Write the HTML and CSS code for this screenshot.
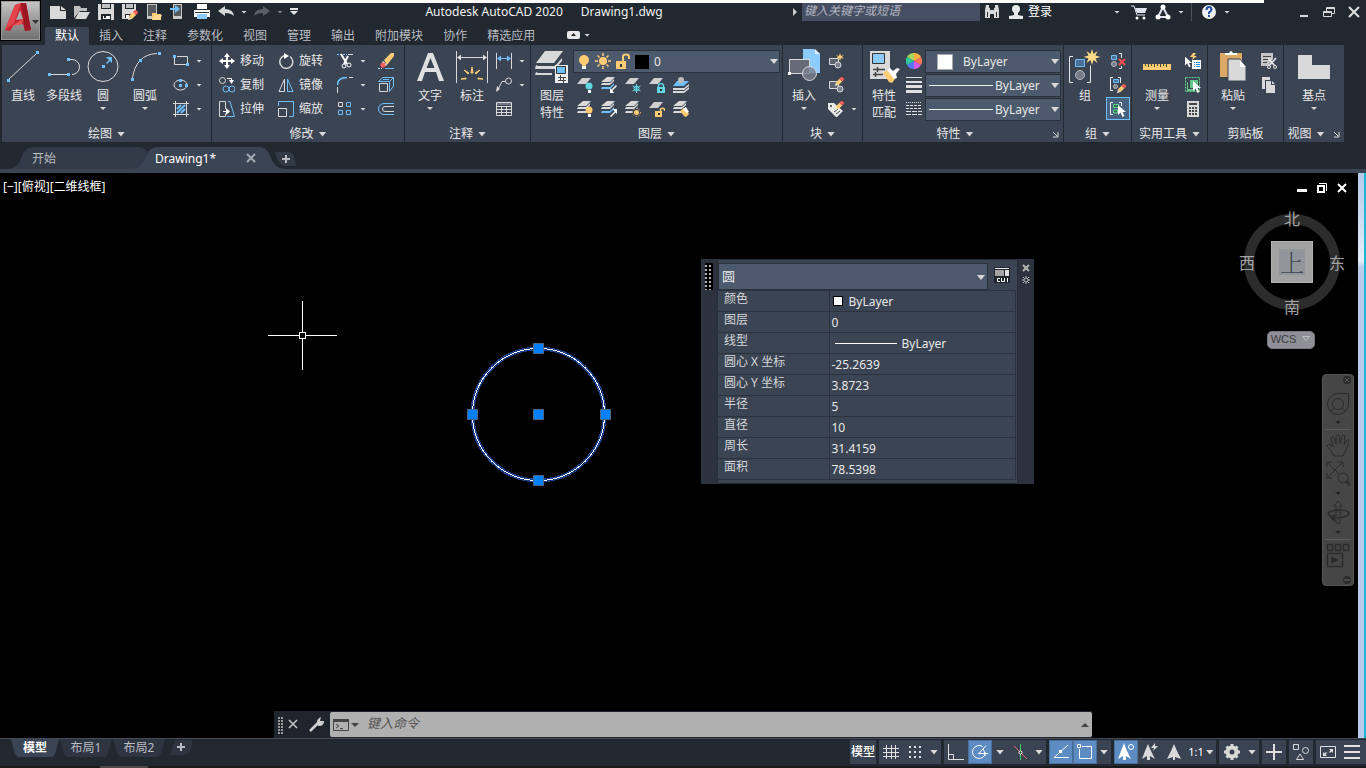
FILE: index.html
```html
<!DOCTYPE html>
<html lang="zh-CN">
<head>
<meta charset="utf-8">
<title>Autodesk AutoCAD 2020 - Drawing1.dwg</title>
<link rel="stylesheet" href="styles.css">
</head>
<body>
<svg class="sprite" aria-hidden="true">
  <symbol id="sheet" viewBox="0 0 16 16"><path d="M5 1h9l-5 6H0z" fill="#d0d0d0"/></symbol>
  <symbol id="stack" viewBox="0 0 16 16"><path d="M6 0h8l-5 5H0zM1 6h8l4-4v2L9 8H0zM1 10h8l4-4v2l-4 4H0z" fill="#d9d9d9"/></symbol>
  <symbol id="stackblue" viewBox="0 0 16 16"><path d="M6 0h8l-5 5H0zM1 6h8l4-4v2L9 8H0z" fill="#d9d9d9"/><path d="M1 10h8l4-4v2l-4 4H0z" fill="#6fbfff"/></symbol>
  <symbol id="pencil" viewBox="0 0 10 10"><path d="M0 10l1-4 3 3z" fill="#f4e2c0"/><path d="M1 6l4-4 3 3-4 4z" fill="#ffcc73"/><path d="M5 2l2-2h1l2 2v1L8 5z" fill="#ff5c5c"/></symbol>
  <symbol id="cursor" viewBox="0 0 8 12"><path d="M0 0v10l2.500-2.500L4.500 12l2-1-2-4H8z" fill="#fff"/></symbol>
</svg>

<div class="overhang"></div>
<header class="top">
  <button class="app" aria-label="应用程序菜单">
    <svg width="36" height="36" viewBox="0 0 36 36"><path d="M1 27L11 2l6-2h5l5 27-6 1-2-7-9 1-4 6z" fill="#c42430"/><path d="M11 2l6-2-7 20-9 7z" fill="#e3434b"/><path d="M17 0h5l5 27-6 1z" fill="#9d1722"/><path d="M12 17l4-10 3 9z" fill="#aaadb0"/><path d="M6 24l13-8-1 5-9 2z" fill="#e65255"/><path d="M28 17h7l-3.500 4z" fill="#333"/></svg>
  </button>
  <div class="titlebar">
    <div class="qat">
      <button aria-label="新建"><svg width="16" height="16"><path d="M0 2h10v5h6v8H0z" fill="#d9d9d9"/><path d="M11 2l5 4h-5z" fill="#d9d9d9"/></svg></button>
      <button aria-label="打开"><svg width="16" height="16"><path d="M0 14V2h6l1 2h6v3H6z" fill="#bfbfbf"/><path d="M5 8h11l-4 7H1z" fill="#d9d9d9"/></svg></button>
      <button aria-label="保存"><svg width="16" height="16"><path d="M0 0h3v5h10V0h3v16H0z" fill="#d9d9d9"/><path d="M4 0h8v4H4z" fill="#bfbfbf"/><path d="M3 10h10v6H3z" fill="#22252b"/><path d="M5 12h7v3H5z" fill="#fff"/><path d="M6 12h2v2H6z" fill="#22252b"/></svg></button>
      <button aria-label="另存为"><svg width="16" height="16"><path d="M0 0h3v5h9V0h2v10l-5 5H0z" fill="#d9d9d9"/><path d="M4 0h7v4H4z" fill="#bfbfbf"/><path d="M3 10h6v4H3z" fill="#22252b"/><path d="M4 11h3v3H4z" fill="#fff"/><use href="#pencil" x="6" y="6" width="10" height="10"/></svg></button>
      <button aria-label="从 Web 打开"><svg width="16" height="16"><path d="M1 0h10v15H1z" fill="#c8c8c8"/><path d="M2 1h8v11H2z" fill="#56585c"/><path d="M6 9h4l1 1h4v6H6z" fill="#ffcc73"/><path d="M6 16l2-5h8l-2 5z" fill="#ffdb92"/></svg></button>
      <button aria-label="保存到 Web"><svg width="16" height="16"><path d="M3 0h9v15H3z" fill="#c8c8c8"/><path d="M4 1h7v11H4z" fill="#56585c"/><path d="M0 4h5V1l5 4-5 4V6H0z" fill="#6fbfff"/></svg></button>
      <button aria-label="打印"><svg width="16" height="16"><path d="M3 0h10v5H3zM0 6h16v7H0z" fill="#fff"/><path d="M1 8h14v1H1z" fill="#333"/><path d="M3 10h10v5H3z" fill="#8ccbff"/></svg></button>
      <button aria-label="放弃"><svg width="16" height="16"><path d="M0 7l7-5v3q8 0 9 7-3-3-9-3v3z" fill="#d9d9d9"/></svg></button>
      <button class="slim" aria-label="放弃列表"><i class="caret s"></i></button>
      <button aria-label="重做"><svg width="16" height="16"><path d="M16 7L9 2v3q-8 0-9 7 3-3 9-3v3z" fill="#5a6068"/></svg></button>
      <button class="slim dim" aria-label="重做列表"><i class="caret s"></i></button>
      <button class="custom" aria-label="自定义快速访问工具栏"><svg width="10" height="8"><path d="M1 0h8v2H1zM1 3h8L5 7z" fill="#e6e6e6"/></svg></button>
    </div>
    <h1 class="title"><span>Autodesk AutoCAD 2020</span><span>Drawing1.dwg</span></h1>
    <div class="infocenter">
      <button class="slim" aria-label="折叠搜索"><svg width="5" height="8"><path d="M0 0l4 4-4 4z" fill="#ccc"/></svg></button>
      <input class="search" type="text" placeholder="键入关键字或短语" aria-label="搜索">
      <button class="tool" aria-label="查找"><svg width="16" height="16"><path d="M2 1h3v3h1v2h4V4h1V1h3l1 5v8h-5v-4H6v4H1V6z" fill="#d9d9d9"/><path d="M3 8h1v5H3zM12 8h1v5h-1z" fill="#333"/></svg></button>
      <button class="signin"><svg width="16" height="16"><circle cx="8" cy="5" r="4" fill="#e8e8e8"/><path d="M6 8h4v3l5 1v3H1v-3l5-1z" fill="#e8e8e8"/></svg>登录</button>
      <button class="slim account" aria-label="帐户"><i class="caret s"></i></button>
      <button class="tool" aria-label="应用商店"><svg width="16" height="16"><path d="M0 2h3l3 9h8" fill="none" stroke="#e0e4f0"/><path d="M4 4h12l-2 5H6z" fill="#e0e4f0"/><circle cx="6" cy="14" r="1.500" fill="#fff"/><circle cx="13" cy="14" r="1.500" fill="#fff"/></svg></button>
      <button class="tool" aria-label="Autodesk 360"><svg width="16" height="16"><path d="M8 3L3 13h10z" fill="none" stroke="#dde1f0" stroke-width="2"/><circle cx="8" cy="3" r="2.500" fill="#fff"/><circle cx="3" cy="13" r="2.500" fill="#fff"/><circle cx="13" cy="13" r="2.500" fill="#fff"/></svg></button>
      <button class="slim" aria-label="更多应用"><i class="caret s"></i></button>
      <i class="sep"></i>
      <button class="tool" aria-label="帮助"><svg width="16" height="16"><circle cx="8" cy="8" r="7" fill="#f2f2f2"/><path d="M5.500 6q0-3 2.500-3t2.500 2.500q0 1.500-2.500 3V10M8 11v2" fill="none" stroke="#1d4fa5" stroke-width="2"/></svg></button>
      <button class="slim" aria-label="帮助菜单"><i class="caret s"></i></button>
    </div>
    <div class="winbtns">
      <button aria-label="最小化"><svg width="12" height="12"><path d="M2 9h8v2H2z" fill="#d9d9d9"/></svg></button>
      <button aria-label="还原"><svg width="12" height="12"><path d="M3.500 5V1.500h8v6H9M.5 5.500h8v5h-8zM0 6.500h8M3 2.500h9" fill="none" stroke="#d9d9d9"/></svg></button>
      <button aria-label="关闭"><svg width="12" height="12"><path d="M1 1l10 10M11 1L1 11" stroke="#e0e0e0" stroke-width="2"/></svg></button>
    </div>
  </div>
  <nav class="rtabs">
    <a href="#" class="on">默认</a><a href="#">插入</a><a href="#">注释</a><a href="#">参数化</a><a href="#">视图</a><a href="#">管理</a><a href="#">输出</a><a href="#">附加模块</a><a href="#">协作</a><a href="#">精选应用</a>
    <button aria-label="最小化功能区"><svg width="13" height="8"><rect width="13" height="8" rx="2" fill="#e8e8e8"/><path d="M4 5l2.500-3L9 5z" fill="#222"/></svg><i class="caret s"></i></button>
  </nav>
</header>

<main class="ribbon">
  <section class="panel p-draw">
    <div class="body">
      <button class="big w42"><svg width="32" height="34"><path d="M2 30L30 4" stroke="#d9d9d9"/><path d="M0 30h3v3H0zM29 2h3v3h-3z" fill="#6fbfff"/></svg>直线</button>
      <button class="big w40"><svg width="32" height="34"><path d="M2 25.500h18M22 10.500h2a7.500 7.500 0 0 1 0 15" fill="none" stroke="#d9d9d9"/><path d="M0 24h3v3H0zM19 24h3v3h-3zM19 9h3v3h-3z" fill="#6fbfff"/></svg>多段线</button>
      <button class="big w38"><svg width="32" height="34"><circle cx="16" cy="17.500" r="15" fill="none" stroke="#d9d9d9"/><path d="M15 16h3v3h-3zM19 8h6v6l-2-2-3 3-1-1 3-3z" fill="#6fbfff"/></svg>圆<i class="caret s"></i></button>
      <button class="big w46"><svg width="32" height="34"><path d="M3.500 29Q5 18 11 11.500T28 4.500" fill="none" stroke="#d9d9d9"/><path d="M2 29h3v3H2zM10 10h3v3h-3zM29 3h3v3h-3z" fill="#6fbfff"/></svg>圆弧<i class="caret s"></i></button>
      <div class="col pad5">
        <button class="sm" aria-label="矩形"><svg width="16" height="16"><path d="M1.500 4v7.500H13M4 3.500h10.500V11" fill="none" stroke="#d9d9d9"/><path d="M0 2h3v3H0zM13 10h3v3h-3z" fill="#6fbfff"/></svg><i class="caret s"></i></button>
        <button class="sm" aria-label="椭圆"><svg width="16" height="16"><ellipse cx="7.500" cy="8" rx="6.500" ry="5" fill="none" stroke="#d9d9d9"/><path d="M6 2h3v3H6zM6 7h3v3H6zM12 7h3v3h-3z" fill="#6fbfff"/></svg><i class="caret s"></i></button>
        <button class="sm" aria-label="图案填充"><svg width="16" height="16"><path d="M0 2.500h16M0 13.500h16M2.500 0v16M13.500 0v16" stroke="#d9d9d9"/><path d="M4 8l4-4M4 12l8-8M8 12l4-4" stroke="#6fbfff" stroke-width="2"/></svg><i class="caret s"></i></button>
      </div>
    </div>
    <h2>绘图<i class="caret"></i></h2>
  </section>

  <section class="panel p-mod">
    <div class="body modgrid">
      <button class="lab"><svg width="16" height="16"><path d="M8 0l3 4H9v3h3V5l4 3-4 3V9H9v3h2l-3 4-3-4h2V9H4v2L0 8l4-3v2h3V4H5z" fill="#fff"/></svg>移动</button>
      <button class="lab"><svg width="16" height="16"><path d="M12 3.500A6.500 6.500 0 1 1 7 2.500" fill="none" stroke="#d9d9d9" stroke-width="1.500"/><path d="M6 0l5 3-5 3z" fill="#fff"/></svg>旋转</button>
      <button class="sm" aria-label="修剪"><svg width="16" height="16"><path d="M0 1.500h10" stroke="#6fbfff" stroke-dasharray="2 1"/><path d="M11 1.500h5" stroke="#d9d9d9"/><path d="M4 1l6 10M11 3L7 11" stroke="#fff" stroke-width="2"/><circle cx="7" cy="13" r="2" fill="none" stroke="#fff"/><circle cx="12" cy="12" r="2" fill="none" stroke="#fff"/></svg><i class="caret s"></i></button>
      <button class="sm" aria-label="删除"><svg width="16" height="16"><path d="M0 15.500h4" stroke="#d9d9d9" stroke-dasharray="2 1"/><path d="M7 15.500h9" stroke="#6fbfff"/><path d="M6 7l7-7h3v3L9 12z" fill="#ffcc73"/><path d="M5 8l4 4-1 1-4-4z" fill="#fff"/><circle cx="5" cy="12" r="2.500" fill="#ff6060"/></svg></button>

      <button class="lab"><svg width="16" height="16"><circle cx="3.500" cy="3.500" r="3" fill="none" stroke="#d9d9d9"/><path d="M8 1.500h4.500V4" fill="none" stroke="#fff"/><path d="M10 3h5l-2.500 4z" fill="#fff"/><circle cx="7" cy="12" r="3" fill="none" stroke="#6fbfff"/><circle cx="13" cy="12" r="3" fill="none" stroke="#6fbfff"/></svg>复制</button>
      <button class="lab"><svg width="16" height="16"><path d="M6.500 2v12.500H1z" fill="none" stroke="#d9d9d9"/><path d="M9.500 2v12.500H15z" fill="none" stroke="#6fbfff"/></svg>镜像</button>
      <button class="sm" aria-label="圆角"><svg width="16" height="16"><path d="M.5 8Q.5.500 10 .5" fill="none" stroke="#6fbfff" stroke-width="1.500"/><path d="M12 .5h4M.5 10v6" stroke="#d9d9d9"/></svg><i class="caret s"></i></button>
      <button class="sm" aria-label="分解"><svg width="16" height="16"><path d="M1.500 6.500h8v8h-8z" fill="none" stroke="#d9d9d9"/><path d="M.500 4.500L5 .500h10.500V9L11.500 14.500V4.500H.500M11.500 4.500l4-4M5 2.500h6" fill="none" stroke="#6fbfff"/></svg></button>

      <button class="lab"><svg width="16" height="16"><path d="M6.500 8V.5H.500v15H6.500v-3" fill="none" stroke="#d9d9d9"/><path d="M4 10.500h4" stroke="#fff"/><path d="M7 7l4 3.500L7 14z" fill="#fff"/><path d="M9 .5h2l4.500 15H8" fill="none" stroke="#6fbfff"/></svg>拉伸</button>
      <button class="lab"><svg width="16" height="16"><path d="M.5 5V.5h15v15H11" fill="none" stroke="#6fbfff"/><path d="M.5 7.500h8v8h-8z" fill="none" stroke="#d9d9d9"/></svg>缩放</button>
      <button class="sm" aria-label="阵列"><svg width="16" height="16"><path d="M1.500 1.500h4v4h-4z" fill="none" stroke="#d9d9d9"/><path d="M9.500 1.500h4v4h-4zM1.500 9.500h4v4h-4zM9.500 9.500h4v4h-4z" fill="none" stroke="#6fbfff"/></svg><i class="caret s"></i></button>
      <button class="sm" aria-label="偏移"><svg width="16" height="16"><path d="M16 2.500H6a5.500 5.500 0 0 0 0 11h10" fill="none" stroke="#6fbfff"/><path d="M16 5.500H7a2.500 2.500 0 0 0 0 5h9" fill="none" stroke="#d9d9d9"/></svg></button>
    </div>
    <h2>修改<i class="caret"></i></h2>
  </section>

  <section class="panel p-ann">
    <div class="body">
      <button class="big w42 shift4"><svg width="32" height="34"><path d="M3 32L14 4h5l11 28h-5l-3-9H11l-3 9zM12.500 19h8L16.500 9z" fill="#e0e0e0"/></svg>文字<i class="caret s"></i></button>
      <button class="big w42"><svg width="32" height="34"><path d="M.5 2v32M31.500 2v32M2 8.500h28" stroke="#d9d9d9"/><path d="M1 8.500l4-3v6zM31 8.500l-4-3v6z" fill="#d9d9d9"/><path d="M15 24l1-6 1 6zM8 21l5 3-1 1zM24 21l-5 3 1 1zM5 30l5-1v1zM27 30l-5-1v1z" fill="#ffcc73" stroke="#ffcc73"/></svg>标注</button>
      <div class="col pad3">
        <button class="sm" aria-label="线性"><svg width="16" height="16"><path d="M.5 0v16M15.500 0v16" stroke="#d9d9d9"/><path d="M2 5.500h12" stroke="#6fbfff"/><path d="M1 5.500l4-3v6zM15 5.500l-4-3v6z" fill="#6fbfff"/></svg><i class="caret s"></i></button>
        <button class="sm" aria-label="引线"><svg width="16" height="16"><circle cx="12.500" cy="4" r="3" fill="none" stroke="#d9d9d9"/><path d="M9 4.500H6L1 14" fill="none" stroke="#d9d9d9"/><path d="M0 15l1-6 3 3z" fill="#d9d9d9"/></svg><i class="caret s"></i></button>
        <button class="sm" aria-label="表格"><svg width="16" height="16"><path d="M.5 1.500h15v13H.500zM0 5.500h16M0 8.500h16M0 11.500h16M5.500 5v10M10.500 5v10" fill="none" stroke="#d9d9d9"/><path d="M1 2h14v2H1z" fill="#6c7584"/></svg></button>
      </div>
    </div>
    <h2>注释<i class="caret"></i></h2>
  </section>

  <section class="panel p-layer">
    <div class="body">
      <button class="big w42"><svg width="34" height="34"><path d="M10 2h18L19 14H1zM1 16l2 1h17l7-8v3l-7 8H0zM1 23l2 1h14v2H0z" fill="#d9d9d9"/><path d="M20 16h13v18H20z" fill="#ededed"/><path d="M21.500 17.500h9v7h-9z" fill="#6fbfff" stroke="#333"/><path d="M23 28.500h8M23 31.500h8M25.500 26v5M28.500 29v5" stroke="#444"/></svg>图层<br>特性</button>
      <div class="layers">
        <div class="combo">
          <div class="adorn">
            <svg width="72" height="18"><circle cx="6" cy="7" r="5" fill="#ffcc73"/><path d="M4 10h4v3H4z" fill="#ffcc73"/><path d="M4 13h4v3H4z" fill="#fff"/><circle cx="25" cy="8" r="4" fill="#ffcc73"/><path d="M25 0v3M25 13v3M17 8h3M30 8h3M19.500 2.500l2 2M28.500 11.500l2 2M30.500 2.500l-2 2M21.500 11.500l-2 2" stroke="#ffcc73" stroke-width="1.500"/><path d="M38 8h10v8H38z" fill="#ffcc73"/><path d="M45 8V3.500q0-2 3-2t3 2V6" fill="none" stroke="#ffcc73" stroke-width="2"/><path d="M42 11h2v3h-2z" fill="#333"/><path d="M57 2h14v14H57z" fill="#000"/></svg>
          </div>
          <select class="lay" aria-label="图层"><option>0</option></select><i class="caret"></i>
        </div>
        <div class="row">
          <button aria-label="关闭图层"><svg width="16" height="16"><use href="#sheet" width="16" height="16"/><circle cx="12" cy="9" r="3.500" fill="#63d8e4"/><path d="M11 13h3v3h-3z" fill="#fff"/></svg></button>
          <button aria-label="隔离"><svg width="16" height="16"><use href="#stackblue" width="16" height="16"/><path d="M9 16v-5l1.500 1.500L15 8l1 1-4.500 4.500L13 16z" fill="#fff"/></svg></button>
          <button aria-label="冻结"><svg width="16" height="16"><use href="#sheet" width="16" height="16"/><circle cx="11.500" cy="11.500" r="2.500" fill="none" stroke="#63d8e4"/><path d="M11.500 7v9M7.500 9l8 5M7.500 14l8-5" stroke="#63d8e4"/></svg></button>
          <button aria-label="锁定"><svg width="16" height="16"><use href="#sheet" width="16" height="16"/><path d="M8 10h8v6H8z" fill="#63d8e4"/><path d="M9.500 10V8q2.500-3 5 0V10" fill="none" stroke="#63d8e4" stroke-width="1.500"/><path d="M11 12h2v2h-2z" fill="#333"/></svg></button>
          <button aria-label="置为当前"><svg width="16" height="16"><path d="M4 4h12l-5 5H0z" fill="#6fbfff"/><path d="M0 11h11l5-4v2l-5 4H0zM0 14h11l5-4v2l-5 4H0z" fill="#d9d9d9"/><circle cx="8" cy="3" r="3" fill="#bbb"/></svg></button>
        </div>
        <div class="row">
          <button aria-label="打开所有图层"><svg width="16" height="16"><use href="#stack" width="16" height="16"/><circle cx="12" cy="9" r="3.500" fill="#ffcc73"/><path d="M11 13h3v3h-3z" fill="#fff"/></svg></button>
          <button aria-label="取消隔离"><svg width="16" height="16"><use href="#stackblue" width="16" height="16"/><path d="M16 8v5l-1.500-1.500L10 16l-1-1 4.500-4.500L12 8z" fill="#fff"/></svg></button>
          <button aria-label="解冻所有图层"><svg width="16" height="16"><use href="#stack" width="16" height="16"/><circle cx="11.500" cy="11.500" r="4" fill="#3b4453" stroke="#ffcc73" stroke-dasharray="1 2"/><circle cx="11.500" cy="11.500" r="2.500" fill="#ffcc73"/></svg></button>
          <button aria-label="解锁"><svg width="16" height="16"><use href="#sheet" width="16" height="16"/><path d="M6 10h7v6H6z" fill="#ffcc73"/><path d="M11.500 10V8q2-1.500 4 0V10" fill="none" stroke="#ffcc73" stroke-width="1.500"/><path d="M9 12h2v2H9z" fill="#333"/></svg></button>
          <button aria-label="匹配图层"><svg width="16" height="16"><use href="#stack" width="16" height="16"/><path d="M7 10l4-3 5 6-3 3-2-1z" fill="#ffcc73"/><path d="M10 8l3-2 3 5-2 1z" fill="#fff"/></svg></button>
        </div>
      </div>
    </div>
    <h2>图层<i class="caret"></i></h2>
  </section>

  <section class="panel p-block">
    <div class="body">
      <button class="big w42"><svg width="32" height="34"><path d="M15 0h11l6 5v19H15z" fill="#8ccbff"/><path d="M27 0l5 5h-5z" fill="#e0f0ff"/><path d="M1.500 10.500h20v14h-20z" fill="#666b78" stroke="#d9d9d9"/><circle cx="21.500" cy="24.500" r="7" fill="#7a8191" fill-opacity=".8" stroke="#d9d9d9"/><path d="M0 23h3v3H0z" fill="#fff"/></svg>插入<i class="caret s"></i></button>
      <div class="col pad3">
        <button class="sm" aria-label="创建块"><svg width="16" height="16"><path d="M1.500 5.500h9v6h-9z" fill="#5d6573" stroke="#d9d9d9"/><circle cx="10" cy="12" r="3" fill="#7a8191" stroke="#d9d9d9"/><path d="M12 0l1 3 3-1-2 2 2 2-3-1-1 3-1-3-3 1 2-2-2-2 3 1z" fill="#ffcc73"/></svg></button>
        <button class="sm" aria-label="编辑块"><svg width="16" height="16"><path d="M1.500 4.500h9v7h-9z" fill="#5d6573" stroke="#d9d9d9"/><circle cx="12" cy="12" r="3" fill="#7a8191" stroke="#d9d9d9"/><use href="#pencil" x="7" width="9" height="9"/></svg></button>
        <button class="sm" aria-label="编辑属性"><svg width="16" height="16"><path d="M0 2h6l9 8-6 6H8L0 8z" fill="#e8e8e8"/><circle cx="3" cy="5" r="1" fill="#333"/><path d="M6 11l4-3M8 13l4-3" stroke="#444"/><use href="#pencil" x="7" width="9" height="9"/></svg><i class="caret s"></i></button>
      </div>
    </div>
    <h2>块<i class="caret"></i></h2>
  </section>

  <section class="panel p-prop">
    <div class="body">
      <button class="big w42"><svg width="32" height="34"><path d="M2 2h20v28H2z" fill="#d9d9d9"/><path d="M4.500 4.500h12v10h-12z" fill="#8ccbff" stroke="#333"/><path d="M5 20.500h12M5 25.500h10M9.500 18v5M7.500 23v5" stroke="#444" stroke-width="1.500"/><path d="M15 24l4-3 8 9-3 4-3-1z" fill="#ffcc73"/><path d="M19 21l3-2 3 3 4-3 3 1-4 5 1 4-3 1z" fill="#fff"/></svg>特性<br>匹配</button>
      <div class="col icons">
        <svg width="16" height="16"><path d="M8 8V0a8 8 0 0 0-7 4z" fill="#a7d65b"/><path d="M8 8V0a8 8 0 0 1 7 4z" fill="#ffb340"/><path d="M8 8l7-4a8 8 0 0 1 0 8z" fill="#ff7657"/><path d="M8 8l7 4a8 8 0 0 1-7 4z" fill="#d75be0"/><path d="M8 8v8a8 8 0 0 1-7-4z" fill="#5b77ff"/><path d="M8 8L1 12a8 8 0 0 1 0-8z" fill="#2fc79c"/></svg>
        <svg width="16" height="16"><path d="M0 0h16v1H0zM0 4h16v2H0zM0 8h16v3H0zM0 13h16v3H0z" fill="#e0e0e0"/></svg>
        <svg width="16" height="16"><path d="M0 1.500h16" stroke="#ddd" stroke-dasharray="1 1"/><path d="M0 4.500h16M0 7.500h16" stroke="#ddd" stroke-dasharray="3 1"/><path d="M0 10.500h16M0 13.500h16" stroke="#ddd" stroke-dasharray="5 1"/></svg>
      </div>
      <div class="col combos">
        <div class="combo"><i class="chip"></i><select class="c1" aria-label="颜色"><option>ByLayer</option></select><i class="caret"></i></div>
        <div class="combo"><i class="stroke"></i><select class="c2" aria-label="线宽"><option>ByLayer</option></select><i class="caret"></i></div>
        <div class="combo"><i class="stroke"></i><select class="c2" aria-label="线型"><option>ByLayer</option></select><i class="caret"></i></div>
      </div>
    </div>
    <h2><span class="mid">特性<i class="caret"></i></span><svg class="launch" width="7" height="7"><path d="M1 1l4 4M6 1v5H1" fill="none" stroke="#d9d9d9"/></svg></h2>
  </section>

  <section class="panel p-group">
    <div class="body">
      <button class="big w42"><svg width="34" height="34"><path d="M5 7.500H1.500v26H5M19 33.500h3.500v-17" fill="none" stroke="#e6e6e6"/><path d="M7.500 10.500h9v7h-9z" fill="#4b7296" stroke="#6fbfff"/><circle cx="12" cy="26" r="4.500" fill="#777d88" stroke="#bbb"/><path d="M24 0l1.500 5 4-3-2 4.500 5 1.500-5 1.500 2 4.500-4-3L24 16l-1.500-5-4 3 2-4.500-5-1.500 5-1.500-2-4.500 4 3z" fill="#ffdb85"/></svg>组</button>
      <div class="col grp">
        <button class="sm" aria-label="解除编组"><svg width="16" height="16"><path d="M1.500 2.500h5v4h-5z" fill="#4b7296" stroke="#6fbfff"/><circle cx="4" cy="11" r="2.500" fill="#777d88" stroke="#bbb"/><path d="M9 .5h2.500V5M11.500 13v2.500H9" fill="none" stroke="#eee"/><path d="M9 6l6 6M15 6l-6 6" stroke="#ff5050" stroke-width="2"/></svg></button>
        <button class="sm" aria-label="组编辑"><svg width="16" height="16"><path d="M3 .5H.500v13H3M8 .5h2.500V6" fill="none" stroke="#eee"/><path d="M3.500 2.500h5v3h-5z" fill="#4b7296" stroke="#6fbfff"/><circle cx="5.500" cy="9.500" r="2" fill="#777d88" stroke="#bbb"/><use href="#pencil" x="7" y="7" width="9" height="9"/></svg></button>
        <button class="sm hl" aria-label="启用组选择"><svg width="16" height="16"><path d="M3 1.500H.500v12H3M9 1.500h2.500V5" fill="none" stroke="#eee"/><path d="M3.500 3.500h5v3h-5zM3.500 9h4v3h-4z" fill="#2f6b56" stroke="#63d68a"/><use href="#cursor" x="8" y="4" width="8" height="12"/></svg></button>
      </div>
    </div>
    <h2>组<i class="caret"></i></h2>
  </section>

  <section class="panel p-util">
    <div class="body">
      <button class="big w50"><svg width="32" height="34"><path d="M2 15h28v6H2z" fill="#ffcc73"/><path d="M4.500 15v2M7.500 15v3M10.500 15v2M13.500 15v3M16.500 15v2M19.500 15v3M22.500 15v2M25.500 15v3" stroke="#4a4538"/></svg>测量<i class="caret s"></i></button>
      <div class="col pad3">
        <button class="sm" aria-label="快速选择"><svg width="16" height="16"><path d="M8 0h3L9 3h3l-5 4 1-3H5z" fill="#ffcc73"/><path d="M7 7h9v9H7z" fill="#fff"/><path d="M9 9.500h1M11 9.500h4M9 11.500h1M11 11.500h4M9 13.500h1M11 13.500h4" stroke="#2f8fe0"/><use href="#cursor" y="3" width="7" height="12"/></svg></button>
        <button class="sm" aria-label="全部选择"><svg width="16" height="16"><path d="M.5.500h14v14H.500z" fill="none" stroke="#63d68a" stroke-dasharray="2 1"/><path d="M5 3h8v8H5zM3 5v7h7v2H2V5z" fill="#63c58a"/><use href="#cursor" x="8" y="4" width="8" height="12"/></svg></button>
        <button class="sm" aria-label="快速计算器"><svg width="16" height="16"><path d="M2 0h12v16H2z" fill="#d9d9d9"/><path d="M4 2h8v2H4zM4 6h2v2H4zM7 6h2v2H7zM10 6h2v2h-2zM4 9h2v2H4zM7 9h2v2H7zM10 9h2v2h-2zM4 12h2v2H4zM7 12h2v2H7zM10 12h2v2h-2z" fill="#444"/></svg></button>
      </div>
    </div>
    <h2>实用工具<i class="caret"></i></h2>
  </section>

  <section class="panel p-clip">
    <div class="body">
      <button class="big w50"><svg width="32" height="34"><path d="M3 4h22v24H3z" fill="#dba866"/><path d="M8 4h4q2-4 4 0h4v2H8z" fill="#fff"/><path d="M11 10h12l6 8v14H11z" fill="#d9d9d9" stroke="#3b4453"/><path d="M23 11l6 7h-6z" fill="#fff"/></svg>粘贴<i class="caret s"></i></button>
      <div class="col pad3">
        <button class="sm" aria-label="剪切"><svg width="16" height="16"><path d="M0 0h12v6L7 13H0z" fill="#c5c5c5"/><path d="M2 3.500h8M2 6.500h6M2 9.500h4" stroke="#444"/><path d="M7 5l7 8M15 5l-7 8" stroke="#eee" stroke-width="1.500"/><circle cx="8" cy="14" r="1.500" fill="#333" stroke="#eee"/><circle cx="14" cy="14" r="1.500" fill="#333" stroke="#eee"/></svg></button>
        <button class="sm" aria-label="复制剪裁"><svg width="16" height="16"><path d="M1 0h8v3H4v9H1z" fill="#d9d9d9"/><path d="M5 4h5v4h4v8H5zM11 4l3 3h-3z" fill="#d9d9d9"/></svg></button>
      </div>
    </div>
    <h2>剪贴板</h2>
  </section>

  <section class="panel p-view">
    <div class="body">
      <button class="big w60"><svg width="32" height="34"><path d="M0 6h14v10h18v14H0z" fill="#d9d9d9"/></svg>基点<i class="caret s"></i></button>
    </div>
    <h2><span class="mid">视图<i class="caret"></i></span><svg class="launch" width="7" height="7"><path d="M1 1l4 4M6 1v5H1" fill="none" stroke="#d9d9d9"/></svg></h2>
  </section>
</main>

<nav class="files">
  <a href="#" class="ftab start"><svg class="shape" width="145" height="22"><path d="M0 22Q11 22 15 9Q18 0 27 0H130Q140 0 141 8Q142 18 145 22z" fill="#323a47"/></svg><span>开始</span></a>
  <div class="ftab cur"><svg class="shape" width="154" height="22"><path d="M0 22Q11 22 15 9Q18 0 27 0H128Q136 0 139 9Q144 22 154 22z" fill="#3b4453"/></svg><a href="#">Drawing1*</a><button aria-label="关闭 Drawing1"><svg width="10" height="10"><path d="M1 1l8 8M9 1L1 9" stroke="#a5a9b0" stroke-width="2"/></svg></button></div>
  <button class="plus" aria-label="新建图形"><svg width="22" height="15"><path d="M0 0h13q7 0 8 14h-9Q3 14 0 0z" fill="#323a45"/><path d="M7 7h8M11 3v8" stroke="#b8bcc2" stroke-width="2"/></svg></button>
</nav>

<div class="canvas">
  <svg class="drawing">
    <g fill="none" shape-rendering="crispEdges">
      <path d="M268 162.500h31M306 162.500h31M302.500 128v31M302.500 166v31M299.500 159.500h6v6h-6z" stroke="#fff"/>
      <circle cx="538.500" cy="241.500" r="66" stroke="#1c3f88" stroke-width="4"/>
      <circle cx="538.500" cy="241.500" r="66" stroke="#fff"/>
    </g>
    <path d="M533.500 170.500h10v10h-10zM533.500 236.500h10v10h-10zM533.500 302.500h10v10h-10zM467.500 236.500h10v10h-10zM600.500 236.500h10v10h-10z" fill="#007fff" stroke="#4d6685"/>
  </svg>
  <div class="vplabel">[−][俯视][二维线框]</div>
  <div class="docbtns">
    <button aria-label="最小化视口"><svg width="12" height="12"><path d="M1 7h10v3H1z" fill="#fff"/></svg></button>
    <button aria-label="还原视口"><svg width="12" height="12"><path d="M3 1.500h7.500V9" fill="none" stroke="#fff"/><path d="M2 4h6v6H2z" fill="none" stroke="#fff" stroke-width="2"/></svg></button>
    <button aria-label="关闭视口"><svg width="12" height="12"><path d="M2 2l8 8M10 2l-8 8" stroke="#fff" stroke-width="2"/></svg></button>
  </div>

  <div class="cube">
    <svg class="ring" width="96" height="96"><circle cx="48" cy="48" r="43" fill="none" stroke="#2c2c2c" stroke-width="10"/></svg>
    <span class="n">北</span><span class="w">西</span><button class="face"><span>上</span></button><span class="e">东</span><span class="s">南</span>
  </div>
  <button class="wcs">WCS<svg width="9" height="6"><path d="M.5.500h7L4 4.500z" fill="none" stroke="#c0c0c8"/></svg></button>

  <div class="navbar">
    <svg class="dot" width="10" height="10"><circle cx="5" cy="5" r="4" fill="#2c2c2c"/><path d="M3 3l4 4M7 3L3 7" stroke="#555"/></svg>
    <button aria-label="导航控制盘"><svg width="24" height="24"><path d="M12 1.500h10.500V12a10.500 10.500 0 1 1-10.500-10.500z" fill="none" stroke="#2b2b2b"/><circle cx="12" cy="12" r="5.500" fill="none" stroke="#2b2b2b"/><path d="M8 16l-4 4M16 16l4 4" stroke="#2b2b2b"/></svg></button>
    <i class="caret s"></i><hr>
    <button aria-label="平移"><svg width="24" height="24"><path d="M8 23C6 18 3 16 1 13q1-3 4-1l2 2L5 5q1-3 3 0l2 6V3q2-3 3 0l1 8 2-8q2-2 3 0l-1 9 3-5q2-1 2 1l-3 9-3 6z" fill="none" stroke="#2b2b2b"/></svg></button>
    <button aria-label="范围缩放"><svg width="24" height="26"><path d="M1 6V1h5M12 1h5v5M1 12v5h5M1 1l16 16M17 1L1 17" fill="none" stroke="#2b2b2b"/><circle cx="17" cy="17" r="5" fill="#464646" stroke="#2b2b2b"/><path d="M20 20l4 4" stroke="#2b2b2b" stroke-width="3"/></svg></button>
    <i class="caret s"></i>
    <button aria-label="动态观察"><svg width="24" height="26"><path d="M12 1l4 5h-2v17h-4V6H8z" fill="none" stroke="#2b2b2b"/><path d="M6 17q-10-5 6-7 10 0 11 3 0 4-12 5" fill="none" stroke="#2b2b2b" stroke-width="1.500"/><path d="M4 18l5-4v8z" fill="#2b2b2b"/></svg></button>
    <i class="caret s"></i><hr>
    <button aria-label="ShowMotion"><svg width="24" height="26"><path d="M1.500 1.500h5v6h-5zM9.500 1.500h5v6h-5zM17.500 1.500h5v6h-5zM1.500 10.500h15v13h-15z" fill="none" stroke="#2b2b2b" stroke-width="1.500"/><path d="M5 13l8 4-8 4z" fill="#2b2b2b"/></svg></button>
    <svg class="dot end" width="10" height="10"><circle cx="5" cy="5" r="4" fill="#2c2c2c"/><path d="M2 4h6v2H2z" fill="#4a4a4a"/></svg>
  </div>

  <section class="palette">
    <div class="grip"><i></i></div>
    <div class="pmain">
      <div class="phead">
        <div class="combo"><select aria-label="对象类型"><option>圆</option></select><i class="caret"></i></div>
        <button aria-label="自定义"><svg width="16" height="16"><path d="M0 0h16v16H0z" fill="#20242b"/><path d="M1 1h14v1H1z" fill="#eee"/><path d="M1 3h9v6H1z" fill="#a3a3a3"/><path d="M11 3h4v6h-4z" fill="#ddd"/><path d="M6 11.500H3.500v3H6M7.500 11v3.500h3V11M13.500 11v4" fill="none" stroke="#fff"/></svg></button>
      </div>
      <table>
        <tr><th>颜色</th><td><i class="swatch"></i>ByLayer</td></tr>
        <tr><th>图层</th><td>0</td></tr>
        <tr><th>线型</th><td><i class="ltype"></i>ByLayer</td></tr>
        <tr><th>圆心 X 坐标</th><td>-25.2639</td></tr>
        <tr><th>圆心 Y 坐标</th><td>3.8723</td></tr>
        <tr><th>半径</th><td>5</td></tr>
        <tr><th>直径</th><td>10</td></tr>
        <tr><th>周长</th><td>31.4159</td></tr>
        <tr><th>面积</th><td>78.5398</td></tr>
      </table>
    </div>
    <div class="pside">
      <button aria-label="关闭面板"><svg width="8" height="8"><path d="M1 1l6 6M7 1L1 7" stroke="#b5b5b5" stroke-width="2"/></svg></button>
      <button aria-label="选项"><svg width="8" height="8"><circle cx="4" cy="4" r="2" fill="none" stroke="#b5b5b5"/><path d="M4 0v2M4 6v2M0 4h2M6 4h2M1 1l1 1M6 6l1 1M7 1L6 2M2 6L1 7" stroke="#b5b5b5"/></svg></button>
    </div>
  </section>

  <div class="cmd">
    <i class="dots"></i>
    <button aria-label="关闭命令行"><svg width="10" height="10"><path d="M1 1l8 8M9 1L1 9" stroke="#c5c5c5" stroke-width="1.500"/></svg></button>
    <button class="wrench" aria-label="自定义"><svg width="16" height="16"><path d="M1 15l8-8" stroke="#d0d0d0" stroke-width="2.500"/><path d="M8 9q-1-6 4-8l-1 4h4q0 5-5 5z" fill="#d0d0d0"/></svg></button>
    <label class="cmdbox">
      <svg width="28" height="14"><path d="M.5 1.500h15v11H.500z" fill="none" stroke="#444"/><path d="M0 1h16v3H0z" fill="#444"/><path d="M3 6l3 2-3 2M7 10.500h3" fill="none" stroke="#444"/><path d="M18 5h8l-4 4z" fill="#444"/></svg>
      <input type="text" placeholder="键入命令" aria-label="命令">
      <svg width="8" height="4"><path d="M0 4l4-4 4 4z" fill="#444"/></svg>
    </label>
  </div>
  <div class="edge"></div>
</div>

<footer class="status">
  <nav class="ltabs">
    <a href="#" class="on">模型</a><a href="#">布局1</a><a href="#">布局2</a>
    <button aria-label="新建布局"><svg width="22" height="16"><path d="M0 15L5 0h17q0 15-10 15z" fill="#2e3541"/><path d="M7 7h8M11 3v8" stroke="#b8bcc2" stroke-width="2"/></svg></button>
  </nav>
  <div class="tools">
    <div class="grp2"><button class="txt">模型</button></div>
    <div class="grp2"><button aria-label="栅格"><svg width="16" height="16"><path d="M3.500 1v14M8.500 1v14M12.500 1v14M0 4.500h16M0 8.500h16M0 12.500h16" stroke="#e0e0e0"/></svg></button><button aria-label="捕捉"><svg width="16" height="16"><path d="M2 2h2v2H2zM7 2h2v2H7zM12 2h2v2h-2zM2 7h2v2H2zM7 7h2v2H7zM12 7h2v2h-2zM2 12h2v2H2zM7 12h2v2H7zM12 12h2v2h-2z" fill="#e0e0e0"/></svg></button><button class="dd" aria-label="捕捉设置"><i class="caret"></i></button></div>
    <div class="grp2"><button aria-label="正交"><svg width="18" height="18"><path d="M1.500 1v15.500H17M1.500 11.500h5v5" fill="none" stroke="#e0e0e0"/></svg></button><button class="act" aria-label="极轴追踪"><svg width="18" height="18"><path d="M11.500 3.500a6.500 6.500 0 1 0 3 6" fill="none" stroke="#fff"/><path d="M7 10.500h10M8 10.500l7-8M12 6q2 2 2 7" fill="none" stroke="#fff"/></svg></button><button class="dd wide" aria-label="极轴设置"><i class="caret"></i></button><button aria-label="等轴测"><svg width="16" height="16"><path d="M8.500 0v16" stroke="#45c46e" stroke-width="1"/><path d="M2 2l13 13" stroke="#e26a6f"/><circle cx="8.500" cy="8.500" r="1.500" fill="#333" stroke="#fff"/></svg></button><button class="dd" aria-label="等轴测设置"><i class="caret"></i></button></div>
    <div class="grp2"><button class="act" aria-label="对象捕捉追踪"><svg width="18" height="18"><path d="M17 14.500H2L16 2" fill="none" stroke="#fff"/><path d="M7 7h3v3H7z" fill="#fff"/></svg></button><button class="act" aria-label="对象捕捉"><svg width="18" height="18"><path d="M1.500 1.500h3v3h-3zM6 3.500h9.500v12H3.500V6" fill="none" stroke="#fff"/></svg></button><button class="dd" aria-label="对象捕捉设置"><i class="caret"></i></button></div>
    <div class="grp2"><button class="act" aria-label="注释可见性"><svg width="18" height="18"><path d="M7 0l3 8 4 8-5-3v4H6v-4l-5 3 3-8z" fill="#fff"/><circle cx="14" cy="4" r="2.500" fill="none" stroke="#fff"/></svg></button><button aria-label="自动缩放"><svg width="18" height="18"><path d="M7 1l3 7 4 8-5-3v4H6v-4l-5 3 3-8z" fill="#d9d9d9"/><path d="M14 0l-4 5h3l-1 3 5-5h-3z" fill="#d9d9d9"/></svg></button><button aria-label="注释比例"><svg width="16" height="16"><path d="M8 0l3 7 4 8-6-2v3H7v-3l-6 2 4-8z" fill="#d9d9d9"/></svg></button><button class="scale">1:1<i class="caret"></i></button></div>
    <div class="grp2"><button class="gear" aria-label="切换工作空间"><svg width="16" height="16"><circle cx="8" cy="8" r="4.500" fill="none" stroke="#d9d9d9" stroke-width="4"/><path d="M8 0v3M8 13v3M0 8h3M13 8h3M2.500 2.500l2 2M11.500 11.500l2 2M13.500 2.500l-2 2M4.500 11.500l-2 2" stroke="#d9d9d9" stroke-width="3"/></svg></button><button class="dd" aria-label="工作空间列表"><i class="caret"></i></button></div>
    <div class="grp2"><button aria-label="注释监视器"><svg width="16" height="16"><path d="M8 0v16M0 8h16" stroke="#e0e0e0" stroke-width="2"/></svg></button></div>
    <div class="grp2"><button aria-label="隔离对象"><svg width="16" height="16"><path d="M.5.500h5v5h-5zM7 10l3.500 5.500h-7z" fill="none" stroke="#d9d9d9"/><circle cx="12.500" cy="6.500" r="3" fill="none" stroke="#d9d9d9"/></svg></button></div>
    <div class="grp2 last"><button aria-label="全屏显示"><svg width="16" height="16"><path d="M.5 2.500h15v11H.500z" fill="none" stroke="#e0e0e0"/><path d="M9 5h4v4l-1.500-1.500L10 9 9 8l1.500-1.500zM3 8v4h4L5.500 10.500 7 9 6 8 4.500 9.500z" fill="#e0e0e0"/></svg></button><button aria-label="自定义"><svg width="16" height="16"><path d="M0 2h16M0 8h16M0 14h16" stroke="#e0e0e0" stroke-width="2"/></svg></button></div>
  </div>
</footer>
<div class="tray"><i></i></div>
</body>
</html>
```
FILE: styles.css
```css
* { box-sizing: border-box; }

body {
  margin: 0;
  height: 100vh;
  display: flex;
  flex-direction: column;
  overflow: hidden;
  background: #212830;
  color: #e8e8e8;
  font: 12px/16px "Noto Sans", "Noto Sans CJK SC", sans-serif;
}

button, select, input {
  font: inherit;
  color: inherit;
  background: none;
  border: 0;
  padding: 0;
  margin: 0;
  border-radius: 0;
  outline: 0;
}
button { display: flex; align-items: center; justify-content: center; flex: none; }
a { color: inherit; text-decoration: none; }
svg { display: block; flex: none; }
h1, h2 { margin: 0; font-size: inherit; font-weight: 400; }
i { font-style: normal; }
.sprite { position: absolute; width: 0; height: 0; }

.caret {
  display: block;
  flex: none;
  width: 8px;
  height: 5px;
  background: #d9d9d9;
  clip-path: polygon(0 0, 100% 0, 50% 100%);
}
.caret.s { width: 6px; height: 3px; }
.dim { opacity: .5; }

/* title bar and ribbon tabs */
.overhang { position: absolute; top: 0; left: 102px; right: 102px; height: 3px; background: #fcfcfc; z-index: 2; }
.top { display: grid; grid-template-columns: 45px 1fr; grid-template-rows: 24px 21px; flex: none; }
.app {
  grid-row: 1 / 3;
  width: 41px;
  height: 41px;
  padding-left: 2px;
  border: 1px solid #000;
  background: linear-gradient(#c6c6c6, #6f6f6f);
  box-shadow: inset 0 0 0 1px #999;
}
.titlebar { display: flex; align-items: center; }
.qat { display: flex; align-items: center; padding-left: 1px; }
.qat button { width: 24px; height: 24px; }
.qat .slim { width: 12px; }
.qat .custom { width: 16px; }
.title { flex: 1; display: flex; justify-content: center; gap: 18px; padding-right: 4px; color: #f2f2f2; white-space: nowrap; }
.infocenter { display: flex; align-items: center; }
.infocenter .slim { width: 12px; height: 20px; }
.search { width: 178px; height: 18px; padding: 0 2px 3px; background: #454e62; font-style: italic; color: #fff; }
.search::placeholder { color: #b4b8c2; opacity: 1; }
.tool { width: 24px; height: 24px; }
.signin { gap: 4px; padding-left: 4px; color: #fff; }
.infocenter .account { margin: 0 4px 0 59px; }
.sep { width: 1px; height: 18px; background: #4b525c; margin: 0 5px 0 4px; }
.winbtns { display: flex; gap: 1px; margin-left: 59px; }
.winbtns button { width: 24px; height: 24px; }

.rtabs { display: flex; align-items: flex-end; color: #b9bcc1; }
.rtabs a { padding: 1px 10px; height: 18px; border-radius: 2px 2px 0 0; }
.rtabs .on { background: #3b4453; color: #fff; }
.rtabs button { gap: 4px; height: 20px; margin-left: 22px; }

/* ribbon */
.ribbon { display: flex; gap: 1px; padding-left: 2px; flex: none; }
.panel { background: #3b4453; flex: none; display: flex; flex-direction: column; }
.p-draw { width: 209px; }
.p-mod { width: 192px; }
.p-ann { width: 125px; }
.p-layer { width: 251px; }
.p-block { width: 79px; }
.p-prop { width: 200px; }
.p-group { width: 67px; }
.p-util, .p-clip { width: 75px; }
.p-view { width: 60px; }
.panel h2 { height: 18px; padding-top: 2px; display: flex; align-items: center; justify-content: center; gap: 5px; }
.mid { flex: 1; display: flex; align-items: center; justify-content: center; gap: 5px; }
.launch { margin-right: 4px; }
.body { display: flex; height: 79px; padding-top: 4px; }
.big { flex-direction: column; justify-content: flex-start; align-self: flex-start; gap: 4px; line-height: 17px; text-align: center; }
.big .caret { margin-top: -1px; }
.w38 { width: 38px; }
.w40 { width: 40px; }
.w42 { width: 42px; }
.w46 { width: 46px; }
.w50 { width: 50px; }
.w60 { width: 60px; }
.shift4 { margin-left: 4px; }
.col { display: flex; flex-direction: column; }
.pad3 { padding-left: 3px; }
.pad5 { padding-left: 5px; }
.sm { height: 24px; gap: 7px; justify-content: flex-start; }
.modgrid { display: grid; grid-template-columns: 59px 59px 41px 16px; grid-auto-rows: 24px; padding-left: 7px; }
.lab { gap: 5px; justify-content: flex-start; }

.combo { position: relative; display: flex; align-items: center; height: 23px; background: #4d5a6d; border: 1px solid #2a313c; }
.combo select { appearance: none; flex: 1; height: 100%; }
.combo .caret { position: absolute; right: 1px; pointer-events: none; }
.layers { flex: 1; padding: 1px 2px 0 0; }
.adorn { padding: 0 0 0 4px; }
.combo .lay { padding-left: 4px; }
.row { display: flex; height: 24px; }
.row button { width: 24px; }
.icons { gap: 8px; padding: 4px 3px 0 1px; }
.combos { flex: 1; padding: 1px 2px 0 0; gap: 1px; }
.chip { width: 16px; height: 16px; margin-left: 11px; background: #fff; border: 1px solid #aaa; }
.stroke { width: 64px; height: 1px; margin-left: 3px; background: #f0f0f0; }
.c1 { padding-left: 10px; }
.c2 { padding-left: 2px; }
.grp .sm { width: 24px; justify-content: center; }
.grp .hl { height: 23px; background: #47617f; border: 1px solid #6fbfff; }

/* file tabs */
.files { display: flex; height: 31px; padding: 5px 0 0 7px; border-bottom: 4px solid #3b4453; flex: none; }
.ftab { position: relative; display: flex; align-items: center; height: 22px; padding-top: 2px; }
.ftab > * { position: relative; }
.ftab .shape { position: absolute; left: 0; top: 0; }
.start { width: 124px; padding-left: 25px; color: #b9bcc1; }
.cur { width: 144px; padding-left: 24px; color: #fff; }
.cur button { margin: 0 0 2px 30px; }
.plus { align-self: flex-start; padding-top: 5px; }

/* drawing area */
.canvas { position: relative; flex: 1; min-height: 0; background: #000; overflow: hidden; }
.drawing { position: absolute; inset: 0; width: 100%; height: 100%; }
.vplabel { position: absolute; left: 3px; top: 6px; color: #fff; }
.docbtns { position: absolute; right: 18px; top: 9px; display: flex; gap: 8px; }
.edge { position: absolute; right: 0; top: 0; bottom: 0; width: 8px; border-right: 2px solid #1fb6d6; background: linear-gradient(#b4cbe8, #e4edfa 88px, #b9cdea 94px); }

.cube {
  position: absolute;
  right: 21px;
  top: 36px;
  width: 106px;
  height: 106px;
  display: grid;
  grid-template-columns: 1fr 42px 1fr;
  grid-template-rows: 1fr 42px 1fr;
  color: #a3a3a3;
  font: 16px/18px "Noto Sans CJK SC", sans-serif;
}
.ring { position: absolute; left: 5px; top: 5px; }
.cube > * { place-self: center; }
.cube > span, .face { position: relative; }
.cube .n { grid-column: 2; grid-row: 1; align-self: start; }
.cube .w { grid-column: 1; grid-row: 2; justify-self: start; }
.cube .e { grid-column: 3; grid-row: 2; justify-self: end; }
.cube .s { grid-column: 2; grid-row: 3; align-self: end; }
.face { grid-column: 2; grid-row: 2; width: 42px; height: 42px; background: #a2a2a2; border: 1px solid #b2b2b2; }
.face span { width: 26px; height: 26px; background: #92959c; color: #41454f; font: 24px/26px "Noto Serif CJK SC", "Noto Sans CJK SC", serif; font-weight: 300; }
.wcs { position: absolute; right: 51px; top: 158px; width: 48px; height: 18px; padding-bottom: 2px; gap: 6px; border-radius: 5px; border: 1px solid #77777c; background: #8f8f97; color: #3a3a3f; font: 11px/16px "Liberation Sans", sans-serif; }

.navbar { position: absolute; right: 12px; top: 201px; width: 32px; height: 212px; display: flex; flex-direction: column; align-items: center; background: #464646; border: 1px solid #555; border-radius: 4px; }
.navbar .dot { align-self: flex-end; margin: 0 1px 7px 0; }
.navbar .end { margin: auto 1px 0 0; }
.navbar .caret { background: #222; margin: 5px 0; }
.navbar hr { width: 26px; margin: 0 0 3px; border: 0; border-top: 1px solid #5c5c5c; }
.navbar button + button { margin-top: 4px; }

/* quick properties palette */
.palette { position: absolute; left: 701px; top: 86px; display: flex; background: #2d333e; }
.grip { width: 16px; padding: 4px; }
.grip i { display: block; width: 8px; height: 27px; background: repeating-linear-gradient(#000 0 2px, transparent 2px 4px), repeating-linear-gradient(90deg, #b4b4b4 0 2px, #000 2px 4px); }
.pmain { background: #3b4453; border: 1px solid #272d37; padding: 3px 1px 3px 0; width: 301px; }
.phead { display: flex; }
.phead .combo { width: 270px; height: 27px; }
.phead select { padding: 0 0 2px 3px; font-size: 13px; }
.phead .caret { right: 2px; bottom: 9px; }
.phead button { flex: 1; height: 24px; }
.palette table { width: 298px; border-collapse: collapse; table-layout: fixed; }
.palette tr { height: 21px; }
.palette th { width: 111px; text-align: left; font-weight: 400; padding: 0 0 4px 6px; line-height: 16px; color: #d5d7da; border: 1px solid #2b323d; border-left: 0; }
.palette td { padding: 2px 0 0 2px; line-height: 16px; border: 1px solid #2b323d; }
.swatch { display: inline-block; width: 10px; height: 10px; margin: 0 6px 0 1px; background: #fff; border: 1px solid #000; }
.ltype { display: inline-block; width: 62px; height: 1px; margin: 0 5px 4px 3px; background: #fff; }
.pside { width: 16px; padding-top: 5px; display: flex; flex-direction: column; align-items: center; gap: 4px; }

/* command line */
.cmd { position: absolute; left: 0; right: 0; bottom: 0; margin: 0 auto; width: 818px; max-width: 100%; height: 27px; display: flex; align-items: center; gap: 5px; background: #20252d; padding: 1px 0 1px 4px; }
.dots { width: 5px; height: 18px; background: repeating-linear-gradient(#20252d 0 1px, transparent 1px 3px), repeating-linear-gradient(90deg, #999 0 2px, #20252d 2px 3px); }
.cmd > button { margin-bottom: 2px; }
.wrench { width: 28px; }
.cmdbox { flex: 1; height: 25px; display: flex; align-items: center; gap: 6px; padding: 0 3px; margin-left: -6px; background: #b0b0b0; border-radius: 2px; }
.cmdbox input { flex: 1; padding-bottom: 3px; font-style: italic; font-size: 13px; }
.cmdbox input::placeholder { color: #555; opacity: 1; }

/* status bar */
.status { display: flex; justify-content: space-between; height: 28px; flex: none; border-top: 1px solid #454c57; }
.ltabs { display: flex; height: 18px; padding-left: 11px; color: #b9bcc1; }
.ltabs a { width: 52px; padding-top: 1px; text-align: center; background: #2e3541; clip-path: polygon(0 0, 100% 0, 92% 80%, 88% 100%, 14% 100%, 8% 80%); }
.ltabs .on { width: 48px; background: #3b4453; color: #fff; font-weight: 700; }
.ltabs a + a { margin-left: 1px; }
.ltabs button { margin-left: 5px; }
.tools { display: flex; gap: 3px; padding-top: 1px; }
.grp2 { display: flex; height: 24px; background: #3a4351; }
.grp2 button { width: 24px; height: 24px; }
.grp2 .txt { width: 26px; color: #fff; font-weight: 500; }
.grp2 .act { background: #5c8cc2; border: 1px solid #4a6f9a; }
.grp2 .dd { width: 14px; }
.grp2 .wide { width: 16px; }
.grp2 .scale { width: 30px; gap: 2px; color: #fff; font-size: 11px; }
.grp2 .gear { width: 26px; }
.last { padding-right: 2px; }
.tray { height: 2px; background: #191a1c; flex: none; padding-left: 100px; }
.tray i { display: block; width: 48px; height: 2px; background: #4a4a4a; }
```
